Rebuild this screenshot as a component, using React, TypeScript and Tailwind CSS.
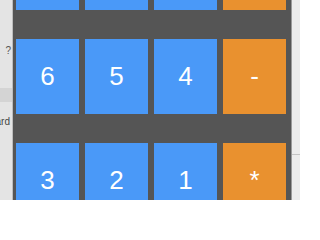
import React from "react";

const rows: { label: string; op?: boolean }[][] = [
  [{ label: "9" }, { label: "8" }, { label: "7" }, { label: "+", op: true }],
  [{ label: "6" }, { label: "5" }, { label: "4" }, { label: "-", op: true }],
  [{ label: "3" }, { label: "2" }, { label: "1" }, { label: "*", op: true }],
];

export default function App() {
  return (
    <div
      className="w-[300px] h-[200px] flex overflow-hidden bg-[#555555]"
      style={{ fontFamily: '"Liberation Sans", Arial, sans-serif' }}
    >
      <div className="w-[13px] shrink-0 bg-[#e4e4e4] border-r border-[#bdbdbd] flex flex-col overflow-hidden">
        <div className="h-[45px]" />
        <div className="h-[12px] text-[10px] leading-[12px] text-[#555] text-right pr-[1px] whitespace-nowrap">?</div>
        <div className="h-[31px]" />
        <div className="h-[14px] bg-[#d4d4d4]" />
        <div className="h-[14px]" />
        <div className="h-[12px] text-[10px] leading-[12px] text-[#444] flex justify-end whitespace-nowrap pr-[2px]">
          Keyboard
        </div>
      </div>
      <div className="flex-1 overflow-hidden pl-[3px] pr-[4px]">
        <div className="-mt-[65px] grid grid-cols-[repeat(4,63px)] auto-rows-[75px] gap-x-[6px] gap-y-[29px]">
          {rows.flat().map((b, i) => (
            <div
              key={i}
              className={`flex items-center justify-center text-white text-[26px] ${
                b.op ? "bg-[#e9912f]" : "bg-[#4a99f8]"
              }`}
            >
              {b.label}
            </div>
          ))}
        </div>
      </div>
      <div className="w-[9px] shrink-0 bg-[#ececec] border-l border-[#9a9a9a] flex flex-col">
        <div className="h-[155px] border-b border-[#c4c4c4]" />
      </div>
    </div>
  );
}
